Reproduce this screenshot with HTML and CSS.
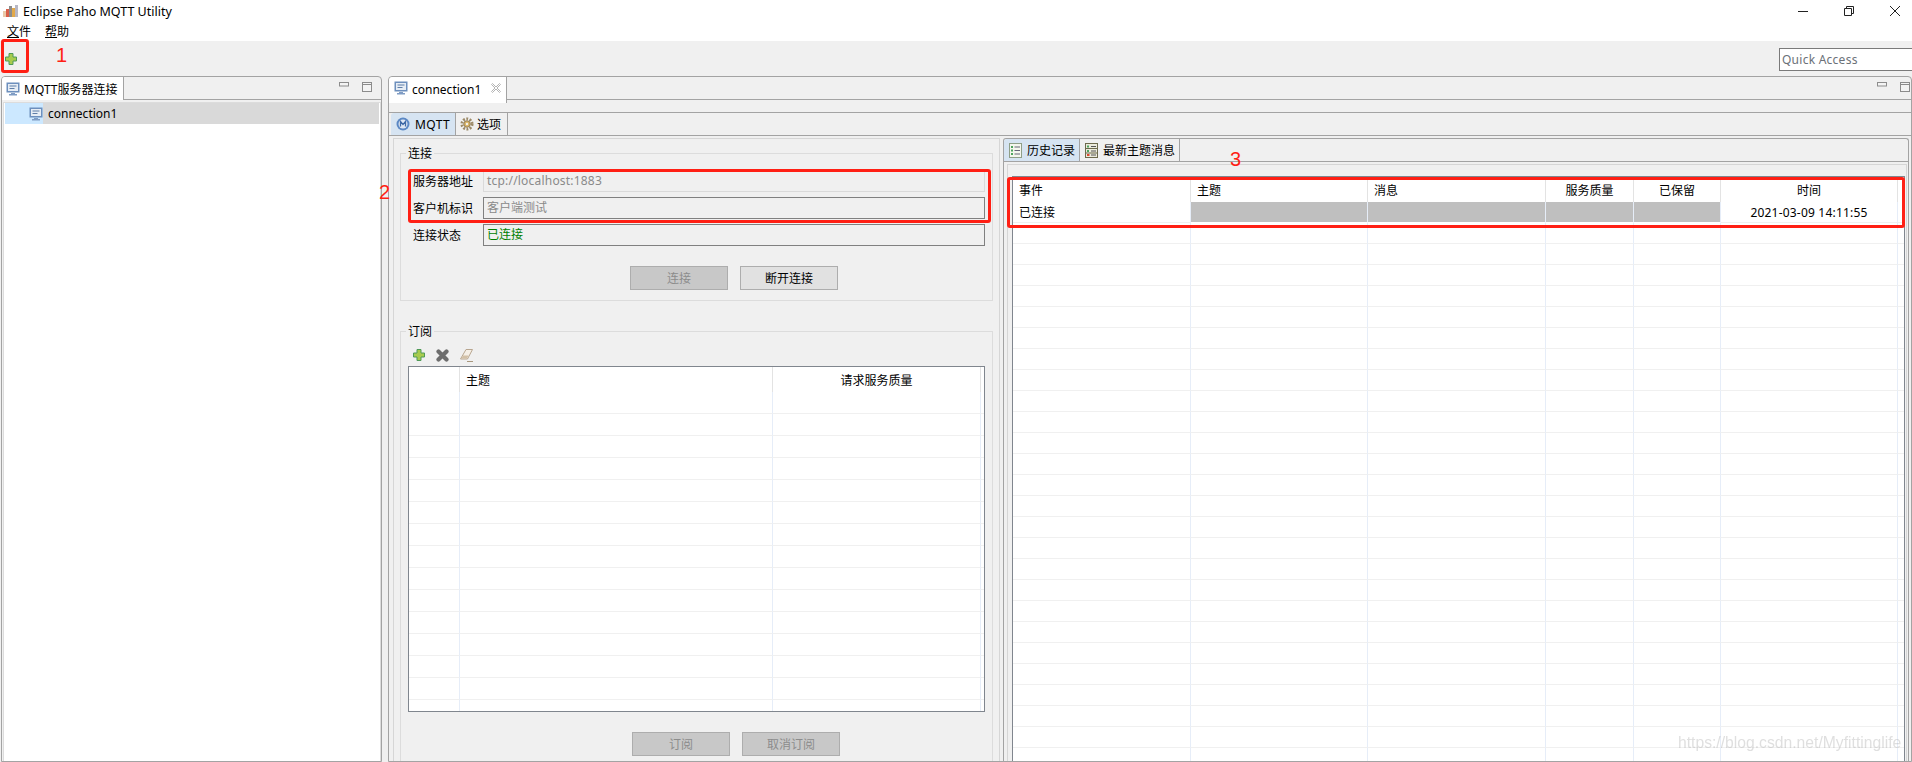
FILE: index.html
```html
<!doctype html>
<html lang="zh-CN">
  <head>
    <title>Eclipse Paho MQTT Utility</title>
    <meta charset="UTF-8">
    <link rel="stylesheet" href="styles.css">
  </head>
  <body>
<svg class="defs" width="0" height="0">
  <symbol id="monitor" viewBox="0 0 14 14">
    <rect x="0.5" y="0.5" width="13" height="10" fill="#6d8fbd"/>
    <rect x="2" y="2" width="10" height="7" fill="#e6edf5"/>
    <path d="M3.5 4h7M3.5 6.5h5" stroke="#5f7ea8" fill="none"/>
    <path d="M5 11h4v1H5zM3 12h8v1.5H3z" fill="#7f9cc4"/>
  </symbol>
  <symbol id="plus" viewBox="0 0 12 12">
    <path d="M4 .5h4v3.500h3.500v4H8v3.500H4V8H.5V4H4z" fill="#a8cb4e" stroke="#4f9a57"/>
  </symbol>
  <symbol id="viewmin" viewBox="0 0 10 5">
    <rect x="0.5" y="0.5" width="9" height="3.500" fill="#f4f4f4" stroke="#8c8c8c"/>
  </symbol>
  <symbol id="viewmax" viewBox="0 0 10 10">
    <rect x="0.500" y="0.500" width="9" height="9" fill="#f4f4f4" stroke="#8c8c8c"/>
    <path d="M0 2.500h10" stroke="#8c8c8c"/>
  </symbol>
</svg>

<header class="titlebar">
  <svg class="app-icon" width="15" height="12" viewBox="0 0 15 12">
    <rect x="0" y="6" width="3" height="6" fill="#eac9a8"/>
    <rect x="3" y="4" width="3" height="8" fill="#d9604a"/>
    <rect x="6" y="1" width="3" height="11" fill="#8c8c8c"/>
    <rect x="9" y="3" width="3" height="9" fill="#e2a94b"/>
    <rect x="12" y="0" width="3" height="12" fill="#b7b7c4"/>
  </svg>
  <span class="app-name">Eclipse Paho MQTT Utility</span>
  <div class="window-controls">
    <svg width="10" height="10" viewBox="0 0 10 10"><path d="M0 5.500h10" stroke="#222"/></svg>
    <svg width="10" height="10" viewBox="0 0 10 10"><path d="M.5 2.500h7v7h-7zM2.500 2.500V.5h7v7h-2" fill="none" stroke="#222"/></svg>
    <svg width="10" height="10" viewBox="0 0 10 10"><path d="M0 0l10 10M10 0L0 10" stroke="#222"/></svg>
  </div>
</header>
<nav class="menubar">
  <span><u>文</u>件</span>
  <span><u>帮</u>助</span>
</nav>
<div class="toolbar">
  <svg class="tool-plus" width="12" height="12"><use href="#plus"/></svg>
  <div class="quick-access">Quick Access</div>
</div>

<main class="workbench">
  <section class="view">
    <div class="view-strip">
      <div class="view-tab">
        <svg width="14" height="14"><use href="#monitor"/></svg>
        MQTT服务器连接
      </div>
      <div class="view-buttons">
        <svg width="10" height="5"><use href="#viewmin"/></svg>
        <svg width="10" height="10"><use href="#viewmax"/></svg>
      </div>
    </div>
    <div class="tree">
      <div class="tree-row">
        <div class="tree-indent"><svg width="14" height="14"><use href="#monitor"/></svg></div>
        <div class="tree-label">connection1</div>
      </div>
    </div>
  </section>

  <section class="editor">
    <div class="view-strip">
      <div class="editor-tab">
        <svg width="14" height="14"><use href="#monitor"/></svg>
        connection1
        <svg class="tab-close" width="10" height="10" viewBox="0 0 10 10">
          <path d="M.5 1.500l1-1L5 4 8.500.5l1 1L6 5l3.500 3.500-1 1L5 6 1.500 9.500l-1-1L4 5z" fill="#fff" stroke="#b4b4b4"/>
        </svg>
      </div>
      <div class="view-buttons">
        <svg width="10" height="5"><use href="#viewmin"/></svg>
        <svg width="10" height="10"><use href="#viewmax"/></svg>
      </div>
    </div>

    <div class="sub-strip">
      <div class="sub-tab active">
        <svg width="14" height="14" viewBox="0 0 14 14">
          <circle cx="7" cy="7" r="6.500" fill="#5b88c4"/>
          <circle cx="7" cy="7" r="4.500" fill="#dfe8f4"/>
          <path d="M4.500 9.500v-5L7 7.500l2.500-3v5" fill="none" stroke="#3f6aa6" stroke-width="1.300"/>
        </svg>
        <span class="latin-wide">MQTT</span>
      </div>
      <div class="sub-tab tab-options">
        <svg width="14" height="14" viewBox="0 0 15 15">
          <circle cx="7.500" cy="7.500" r="5.500" fill="none" stroke="#9c8a68" stroke-width="3" stroke-dasharray="2 1.500"/>
          <circle cx="7.500" cy="7.500" r="3.500" fill="#d8b263" stroke="#8c7a58"/>
          <circle cx="7.500" cy="7.500" r="1.300" fill="#f0f0f0"/>
        </svg>
        选项
      </div>
    </div>

    <div class="detail">
      <div class="form-pane">
        <div class="group group-connect">
          <div class="group-title">连接</div>
          <div class="form-grid">
            <label>服务器地址</label>
            <div class="field field-light">tcp://localhost:1883</div>
            <label>客户机标识</label>
            <div class="field">客户端测试</div>
            <label>连接状态</label>
            <div class="field field-status">已连接</div>
          </div>
          <div class="buttons">
            <button disabled>连接</button>
            <button>断开连接</button>
          </div>
        </div>

        <div class="group group-subscribe">
          <div class="group-title">订阅</div>
          <div class="mini-tools">
            <svg width="12" height="12"><use href="#plus"/></svg>
            <svg width="13" height="13" viewBox="0 0 13 13"><path d="M2.500 2.500l8 8M10.500 2.500l-8 8" stroke="#6e6e6e" stroke-width="4.200" stroke-linecap="round"/></svg>
            <svg width="13" height="13" viewBox="0 0 13 13">
              <path d="M6 .5h6.500L7.500 10H.5z" fill="#f5efe6" stroke="#b8a690"/>
              <path d="M1.500 9.500l1.500-3h5.500l-1.500 3z" fill="#d2c0a6"/>
              <path d="M7 12.500h6" stroke="#a8977e"/>
            </svg>
          </div>
          <div class="table-wrap sub-table">
            <table>
              <colgroup><col class="c-check"><col class="c-topic"><col class="c-qos"><col class="c-rest"></colgroup>
              <thead><tr><th></th><th>主题</th><th class="mid">请求服务质量</th><th class="bare"></th></tr></thead>
              <tbody>
                <tr><td></td><td></td><td></td><td></td></tr>
                <tr><td></td><td></td><td></td><td></td></tr>
                <tr><td></td><td></td><td></td><td></td></tr>
                <tr><td></td><td></td><td></td><td></td></tr>
                <tr><td></td><td></td><td></td><td></td></tr>
                <tr><td></td><td></td><td></td><td></td></tr>
                <tr><td></td><td></td><td></td><td></td></tr>
                <tr><td></td><td></td><td></td><td></td></tr>
                <tr><td></td><td></td><td></td><td></td></tr>
                <tr><td></td><td></td><td></td><td></td></tr>
                <tr><td></td><td></td><td></td><td></td></tr>
                <tr><td></td><td></td><td></td><td></td></tr>
                <tr><td></td><td></td><td></td><td></td></tr>
                <tr><td></td><td></td><td></td><td></td></tr>
                <tr><td></td><td></td><td></td><td></td></tr>
              </tbody>
            </table>
          </div>
          <div class="buttons buttons-sub">
            <button disabled>订阅</button>
            <button disabled>取消订阅</button>
          </div>
        </div>
      </div>

      <div class="history">
        <div class="history-strip">
          <div class="sub-tab active">
            <svg width="13" height="15" viewBox="0 0 13 15">
              <rect x="0.500" y="0.500" width="12" height="14" fill="#f4f6ee" stroke="#8f9f88"/>
              <path d="M2 3h2v2H2zM2 6.500h2v2H2zM2 10h2v2H2z" fill="#4da35c"/>
              <path d="M5.500 4h5.500M5.500 7.500h5.500M5.500 11h5.500" stroke="#667"/>
            </svg>
            历史记录
          </div>
          <div class="sub-tab">
            <svg width="13" height="15" viewBox="0 0 13 15">
              <rect x="0.500" y="0.500" width="12" height="14" fill="#ecebdc" stroke="#6d6a4c"/>
              <path d="M1 5.500h11M1 10h11" stroke="#6d6a4c"/>
              <path d="M2 2.500h2v2H2zM2 7h2v2H2z" fill="#4da35c"/>
              <path d="M2 11h2.500v2H2z" fill="#d9492e"/>
              <path d="M6 3.500h5M6 8h5M6 12h5" stroke="#555"/>
            </svg>
            最新主题消息
          </div>
        </div>
        <div class="history-pane">
          <div class="table-wrap log-table">
            <table>
              <colgroup><col class="c-a"><col class="c-b"><col class="c-c"><col class="c-d"><col class="c-e"><col class="c-f"><col class="c-g"></colgroup>
              <thead><tr><th>事件</th><th>主题</th><th>消息</th><th class="mid">服务质量</th><th class="mid">已保留</th><th class="mid">时间</th><th class="bare"></th></tr></thead>
              <tbody>
                <tr><td>已连接</td><td class="blank"></td><td class="blank"></td><td class="blank"></td><td class="blank"></td><td class="mid stamp">2021-03-09 14:11:55</td><td></td></tr>
                <tr><td></td><td></td><td></td><td></td><td></td><td></td><td></td></tr>
                <tr><td></td><td></td><td></td><td></td><td></td><td></td><td></td></tr>
                <tr><td></td><td></td><td></td><td></td><td></td><td></td><td></td></tr>
                <tr><td></td><td></td><td></td><td></td><td></td><td></td><td></td></tr>
                <tr><td></td><td></td><td></td><td></td><td></td><td></td><td></td></tr>
                <tr><td></td><td></td><td></td><td></td><td></td><td></td><td></td></tr>
                <tr><td></td><td></td><td></td><td></td><td></td><td></td><td></td></tr>
                <tr><td></td><td></td><td></td><td></td><td></td><td></td><td></td></tr>
                <tr><td></td><td></td><td></td><td></td><td></td><td></td><td></td></tr>
                <tr><td></td><td></td><td></td><td></td><td></td><td></td><td></td></tr>
                <tr><td></td><td></td><td></td><td></td><td></td><td></td><td></td></tr>
                <tr><td></td><td></td><td></td><td></td><td></td><td></td><td></td></tr>
                <tr><td></td><td></td><td></td><td></td><td></td><td></td><td></td></tr>
                <tr><td></td><td></td><td></td><td></td><td></td><td></td><td></td></tr>
                <tr><td></td><td></td><td></td><td></td><td></td><td></td><td></td></tr>
                <tr><td></td><td></td><td></td><td></td><td></td><td></td><td></td></tr>
                <tr><td></td><td></td><td></td><td></td><td></td><td></td><td></td></tr>
                <tr><td></td><td></td><td></td><td></td><td></td><td></td><td></td></tr>
                <tr><td></td><td></td><td></td><td></td><td></td><td></td><td></td></tr>
                <tr><td></td><td></td><td></td><td></td><td></td><td></td><td></td></tr>
                <tr><td></td><td></td><td></td><td></td><td></td><td></td><td></td></tr>
                <tr><td></td><td></td><td></td><td></td><td></td><td></td><td></td></tr>
                <tr><td></td><td></td><td></td><td></td><td></td><td></td><td></td></tr>
                <tr><td></td><td></td><td></td><td></td><td></td><td></td><td></td></tr>
                <tr><td></td><td></td><td></td><td></td><td></td><td></td><td></td></tr>
                <tr><td></td><td></td><td></td><td></td><td></td><td></td><td></td></tr>
              </tbody>
            </table>
          </div>
        </div>
      </div>
    </div>
  </section>
</main>

<!-- red marks drawn over the screenshot -->
<div class="mark mark-1"></div>
<div class="mark mark-2"></div>
<div class="mark mark-3"></div>
<div class="mark-num num-1">1</div>
<div class="mark-num num-2">2</div>
<div class="mark-num num-3">3</div>
<div class="watermark">https://blog.csdn.net/Myfittinglife</div>
  </body>
</html>
```

FILE: styles.css
```css
* {
  box-sizing: border-box;
}
html, body {
  margin: 0;
  height: 762px;
  overflow: hidden;
  font-family: "Noto Sans", "Noto Sans CJK SC", sans-serif;
  font-size: 12px;
  color: #000;
  background: #fff;
}
body {
  position: relative;
}
.defs {
  position: absolute;
}
svg {
  display: block;
  flex: none;
}

/* window chrome */
.titlebar {
  height: 21px;
  display: flex;
  align-items: center;
  padding: 1px 0 0 3px;
}
.app-icon {
  margin-right: 5px;
}
.app-name {
  font-size: 12.5px;
}
.window-controls {
  margin-left: auto;
  display: flex;
  gap: 36px;
  padding-right: 12px;
}
.menubar {
  height: 20px;
  display: flex;
  gap: 14px;
  padding-left: 7px;
  align-items: center;
}
.toolbar {
  height: 35px;
  background: #f0f0f0;
  display: flex;
  align-items: flex-start;
}
.tool-plus {
  margin: 12px 0 0 5px;
}
.quick-access {
  margin: 7px 0 0 auto;
  width: 133px;
  height: 23px;
  border: 1px solid #7a7a7a;
  border-right: 0;
  background: #fff;
  color: #6b7178;
  padding-left: 2px;
  line-height: 21px;
  letter-spacing: 0.25px;
}

/* main layout */
.workbench {
  height: 686px;
  background: #f0f0f0;
  display: flex;
  padding-left: 1px;
}
.view {
  width: 381px;
  border: 1px solid #a3a3a3;
  border-radius: 4px 4px 0 0;
  display: flex;
  flex-direction: column;
}
.editor {
  flex: 1;
  margin-left: 6px;
  border: 1px solid #a3a3a3;
  border-radius: 4px 4px 0 0;
  overflow: hidden;
}
.view-strip {
  height: 23px;
  display: flex;
  border-bottom: 1px solid #a3a3a3;
  flex: none;
}
.view-tab {
  width: 122px;
  height: 23px;
  background: #fff;
  border-right: 1px solid #a3a3a3;
  display: flex;
  align-items: center;
  gap: 4px;
  padding-left: 4px;
  white-space: nowrap;
  border-radius: 3px 0 0 0;
}
.editor-tab {
  width: 118px;
  height: 26px;
  background: #fff;
  border-right: 1px solid #a3a3a3;
  display: flex;
  align-items: flex-start;
  gap: 4px;
  padding: 4px 0 0 5px;
  position: relative;
  border-radius: 3px 0 0 0;
}
.tab-close {
  margin: 2px 0 0 6px;
}
.view-buttons {
  margin-left: auto;
  display: flex;
  gap: 13px;
  padding: 5px 9px 0 0;
}
.editor .view-buttons {
  padding-right: 1px;
}

/* tree */
.tree {
  flex: 1;
  background: #fff;
  margin: 2px 0 0 1px;
  border: 1px solid #dcdcdc;
  border-bottom: 0;
  padding: 0 1px;
}
.tree-row {
  height: 21px;
  display: flex;
}
.tree-indent {
  width: 38px;
  background: #cce8ff;
  display: flex;
  justify-content: flex-end;
  align-items: center;
}
.tree-label {
  flex: 1;
  background: #d9d9d9;
  padding-left: 5px;
  line-height: 21px;
}

/* sub tabs */
.sub-strip {
  margin-top: 12px;
  height: 24px;
  border-top: 1px solid #a3a3a3;
  border-bottom: 1px solid #a3a3a3;
  display: flex;
  padding-left: 2px;
}
.sub-strip .sub-tab {
  padding-right: 5px;
}
.sub-strip .tab-options {
  gap: 3px;
  padding: 0 6px 0 4px;
}
.history-strip {
  height: 23px;
  border-bottom: 1px solid #a3a3a3;
  display: flex;
}
.sub-tab {
  display: flex;
  align-items: center;
  gap: 5px;
  padding: 0 4px 0 5px;
  border-right: 1px solid #a3a3a3;
  white-space: nowrap;
}
.sub-tab.active {
  background: #d6e4f2;
  border-radius: 3px 0 0 0;
}
.latin-wide {
  letter-spacing: 0.4px;
}

/* detail area */
.detail {
  display: flex;
  gap: 3px;
  padding: 2px 2px 0 4px;
  height: 640px;
}
.form-pane {
  width: 607px;
  border: 1px solid #d6d6d6;
  padding: 14px 6px 0;
}
.group {
  border: 1px solid #dcdcdc;
}
.group-connect {
  height: 148px;
}
.group-subscribe {
  margin-top: 30px;
  height: 480px;
}
.group-title {
  width: fit-content;
  background: #f0f0f0;
  margin: -9px 0 0 5px;
  padding: 0 2px;
  line-height: 18px;
  height: 18px;
}
.form-grid {
  margin-top: 7px;
  display: grid;
  grid-template-columns: 70px 502px;
  grid-auto-rows: 22px;
  row-gap: 5px;
  padding-left: 12px;
  align-items: center;
}
.field {
  height: 22px;
  border: 1px solid #808080;
  color: #8a8a8a;
  padding-left: 3px;
  line-height: 20px;
}
.field-light {
  border-color: #dadada;
  letter-spacing: 0.2px;
}
.field-status {
  color: #007f00;
}
.buttons {
  display: flex;
  gap: 12px;
  margin: 20px 0 0 229px;
}
.buttons-sub {
  margin: 20px 0 0 231px;
}
button {
  width: 98px;
  height: 24px;
  border: 1px solid #adadad;
  background: #e1e1e1;
  color: #000;
  font: inherit;
  padding: 0;
}
button:disabled {
  background: #c8c8c8;
  color: #8c8c8c;
}
.mini-tools {
  margin: 8px 0 0 12px;
  height: 17px;
  display: flex;
  gap: 11px;
}

/* tables */
.table-wrap {
  border: 1px solid #80868e;
  background: #fff;
  overflow: hidden;
}
.sub-table {
  margin-left: 7px;
  width: 577px;
  height: 346px;
}
.log-table {
  height: 620px;
}
table {
  table-layout: fixed;
  border-collapse: separate;
  border-spacing: 0;
  width: 100%;
}
th {
  font-weight: normal;
  text-align: left;
  padding: 0 6px;
  border-right: 1px solid #e3e3e3;
  overflow: hidden;
  white-space: nowrap;
}
td {
  padding: 0 6px;
  border-right: 1px solid #e6edf8;
  border-bottom: 1px solid #f0f0f0;
  white-space: nowrap;
}
.mid {
  text-align: center;
}
.stamp {
  letter-spacing: 0.2px;
}
.bare, td:last-child {
  border-right: 0;
}
.blank {
  background: #bfbfbf;
  background-clip: padding-box;
  border-bottom-color: #fff;
}
.sub-table th { height: 25px; }
.sub-table td { height: 22px; }
.c-check { width: 51px; }
.c-topic { width: 313px; }
.c-qos { width: 208px; }
.c-rest { width: 3px; }

.log-table th { height: 25px; }
.log-table td { height: 21px; }
.c-a { width: 178px; }
.c-b { width: 177px; }
.c-c { width: 178px; }
.c-d { width: 88px; }
.c-e { width: 87px; }
.c-f { width: 177px; }
.c-g { width: 6px; }

/* history */
.history {
  flex: 1;
  border: 1px solid #a3a3a3;
  border-bottom: 0;
  border-radius: 3px 3px 0 0;
}
.history-pane {
  margin: 2px 1px 0 3px;
  height: 620px;
  border: 1px solid #d6d6d6;
  padding: 11px 1px 0 4px;
}

/* annotations */
.mark {
  position: absolute;
  border: 3px solid #ff1f14;
  border-radius: 3px;
}
.mark-1 { left: 1px; top: 39px; width: 28px; height: 34px; }
.mark-2 { left: 408px; top: 169px; width: 583px; height: 54px; }
.mark-3 { left: 1007px; top: 177px; width: 898px; height: 51px; }
.mark-num {
  position: absolute;
  color: #ff1f14;
  font-size: 20px;
  line-height: 20px;
  font-family: "Liberation Sans", sans-serif;
}
.num-1 { left: 56px; top: 45px; }
.num-2 { left: 379px; top: 182px; }
.num-3 { left: 1230px; top: 149px; }
.watermark {
  position: absolute;
  left: 1678px;
  top: 734px;
  font-family: "Liberation Sans", sans-serif;
  font-size: 15.7px;
  color: rgba(150, 150, 150, 0.3);
  filter: blur(0.5px);
  white-space: nowrap;
}
```
